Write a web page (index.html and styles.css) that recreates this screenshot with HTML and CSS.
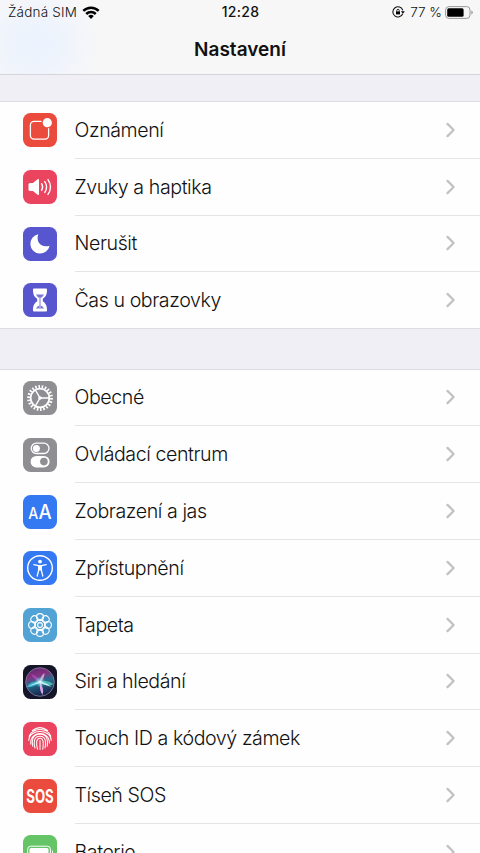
FILE: index.html
```html
<!DOCTYPE html>
<html lang="cs">
<head>
<meta charset="utf-8">
<title>Nastavení</title>
<link rel="stylesheet" href="styles.css">
</head>
<body>
<svg class="defs" width="0" height="0"><defs>
<symbol id="chev" viewBox="0 0 10 16"><path d="M1.500 1.900 7.600 8l-6.100 6.100" fill="none" stroke="#c1c1c4" stroke-width="2.200" stroke-linecap="round" stroke-linejoin="round"/></symbol>
</defs></svg>
<header class="top">
  <div class="status">
    <div class="carrier"><span>Žádná SIM</span>
      <svg class="wifi" viewBox="0 0 18 13"><g fill="none" stroke="#000" stroke-width="2.500"><path d="M1.300 4.800a11 11 0 0 1 15.400 0"/><path d="M4.200 8a6.900 6.900 0 0 1 9.600 0"/></g><path d="M9 13 6.200 10.100a4 4 0 0 1 5.600 0z"/></svg>
    </div>
    <div class="time">12:28</div>
    <div class="power">
      <svg class="lock" viewBox="0 0 13 12"><path d="M10.700 7.800a5.100 5.100 0 1 1 .1-3.500" fill="none" stroke="#111" stroke-width="1.100"/><path d="M8.900 5.200h3.900l-1.900 2.500z"/><rect x="4" y="5.400" width="4" height="3"/><path d="M4.800 5.600V4.500a1.200 1.200 0 0 1 2.400 0v1.100" fill="none" stroke="#000" stroke-width=".8"/></svg>
      <span>77 %</span>
      <svg class="battery" viewBox="0 0 28 13"><rect x=".6" y=".6" width="24.400" height="11.800" rx="3.300" fill="none" stroke="#999" stroke-width="1"/><rect x="2.200" y="2.300" width="16.400" height="8.400" rx="1.500"/><path d="M26.300 4.400q1.500.5 1.500 2.100t-1.500 2.100z" fill="#999"/></svg>
    </div>
  </div>
  <h1>Nastavení</h1>
</header>
<main>
<section class="group">
  <a class="row"><svg class="icon red" viewBox="0 0 34 34"><path d="M18.500 8.300H11a3.600 3.600 0 0 0-3.600 3.600v10.700a3.600 3.600 0 0 0 3.600 3.600h11a3.600 3.600 0 0 0 3.600-3.600v-7.300" fill="none" stroke="#fff" stroke-width="1.300"/><circle cx="24.300" cy="9.700" r="4.600" fill="#fff"/></svg><span class="label">Oznámení<svg class="chev"><use href="#chev"/></svg></span></a>
  <a class="row"><svg class="icon pink" viewBox="0 0 34 34"><path d="M5.500 14.500q0-1.500 1.500-1.500h3l4.500-3.700q1.500-.9 1.500.8v13.800q0 1.700-1.500.8L10 21H7q-1.500 0-1.500-1.500z" fill="#fff"/><path d="M18.600 13.700q2 3.300 0 6.600M21.800 11.600q3.500 5.400 0 10.800M25 9.600q5 7.400 0 14.800" fill="none" stroke="#fff" stroke-width="1.400" stroke-linecap="round"/></svg><span class="label">Zvuky a haptika<svg class="chev"><use href="#chev"/></svg></span></a>
  <a class="row"><svg class="icon purple" viewBox="0 0 34 34"><path d="M15.300 7.300C12.500 15 18.500 21.500 26.600 18.700A9.700 9.700 0 1 1 15.300 7.300z" fill="#fff"/></svg><span class="label">Nerušit<svg class="chev"><use href="#chev"/></svg></span></a>
  <a class="row"><svg class="icon purple" viewBox="0 0 34 34"><path d="M10 6.500q0-1 1-1h12q1 0 1 1c0 5-1 7-4.200 9.300v2.400C23 20.500 24 22.500 24 27.500q0 1-1 1H11q-1 0-1-1c0-5 1-7 4.200-9.300v-2.400C11 13.500 10 11.500 10 6.500z" fill="#fff"/><path d="M13 11.500h8q-1 2-3.300 3.700v7.300q2.500 1 3.300 3h-8q.8-2 3.300-3v-7.300Q14 13.500 13 11.500z" fill="#5856ce" opacity=".8"/><path d="M17 14v11" stroke="#fff" stroke-width=".6"/></svg><span class="label">Čas u obrazovky<svg class="chev"><use href="#chev"/></svg></span></a>
</section>
<section class="group">
  <a class="row"><svg class="icon gray" viewBox="0 0 34 34"><g fill="none" stroke="#fff"><circle cx="17" cy="17" r="9.400" stroke-width="1.900"/><circle cx="17" cy="17" r="11.500" stroke-width="2.800" pathLength="44" stroke-dasharray="1 1"/><path d="M17 17h9M17 17l-4.600-8M17 17l-4.600 8" stroke-width="1.500"/></g><circle cx="17" cy="17" r="1.800" fill="#fff"/></svg><span class="label">Obecné<svg class="chev"><use href="#chev"/></svg></span></a>
  <a class="row"><svg class="icon gray" viewBox="0 0 34 34"><rect x="8.200" y="5.200" width="17.800" height="10.300" rx="5.150" fill="none" stroke="#fff" stroke-width="1.300"/><circle cx="13.400" cy="10.400" r="3.500" fill="#fff"/><rect x="7.600" y="17.900" width="19" height="11.500" rx="5.750" fill="#fff"/><circle cx="20.900" cy="23.600" r="3.800" fill="#8e8e93"/></svg><span class="label">Ovládací centrum<svg class="chev"><use href="#chev"/></svg></span></a>
  <a class="row"><svg class="icon blue" viewBox="0 0 34 34"><text class="aa" x="5.200" y="24.300" font-size="15.500" textLength="10" lengthAdjust="spacingAndGlyphs">A</text><text class="aa" x="15.600" y="24.300" font-size="19.500" textLength="13.200" lengthAdjust="spacingAndGlyphs">A</text></svg><span class="label">Zobrazení a jas<svg class="chev"><use href="#chev"/></svg></span></a>
  <a class="row"><svg class="icon blue" viewBox="0 0 34 34"><circle cx="17" cy="17" r="12.300" fill="none" stroke="#fff" stroke-width="1.400"/><circle cx="17" cy="10.600" r="1.900" fill="#fff"/><path d="M10.800 13.700l4.700.9h3l4.700-.9M14.200 25l1.400-5.500v-4.500h2.800v4.500l1.400 5.500" fill="none" stroke="#fff" stroke-width="1.300" stroke-linecap="round" stroke-linejoin="round"/><path d="M15 14h4v5.500h-4z" fill="#fff"/></svg><span class="label">Zpřístupnění<svg class="chev"><use href="#chev"/></svg></span></a>
  <a class="row"><svg class="icon sky" viewBox="0 0 34 34"><g fill="none" stroke="#fff" stroke-width="1.100"><g id="petals"><circle cx="17" cy="9.100" r="3.500"/><circle cx="17" cy="24.900" r="3.500"/><circle cx="9.100" cy="17" r="3.500"/><circle cx="24.900" cy="17" r="3.500"/></g><use href="#petals" transform="rotate(45 17 17)"/><circle cx="17" cy="17" r="2.400"/><circle cx="17" cy="17" r="5.400"/></g></svg><span class="label">Tapeta<svg class="chev"><use href="#chev"/></svg></span></a>
  <a class="row"><svg class="icon siri" viewBox="0 0 34 34"><defs><linearGradient id="orb" x2=".3" y2="1"><stop offset="0" stop-color="#54286f"/><stop offset=".35" stop-color="#86307f"/><stop offset=".6" stop-color="#256c8c"/><stop offset="1" stop-color="#182851"/></linearGradient><radialGradient id="glow"><stop offset="0" stop-color="#fff"/><stop offset=".3" stop-color="#c5f5fb" stop-opacity=".7"/><stop offset="1" stop-color="#66dce6" stop-opacity="0"/></radialGradient></defs><circle cx="17" cy="17" r="14.300" fill="url(#orb)" stroke="#8c83a0" stroke-width=".8"/><path d="M17 17Q9 15 3.500 22q8 1 13.500-5z" fill="#40c7df" opacity=".75"/><path d="M17 17q7-3 13.500 2-6 4-13.500-2z" fill="#5fe0c9" opacity=".7"/><path d="M17 17q-2-6-9-8 3 6 9 8z" fill="#b44cc6" opacity=".7"/><path d="M17 17q0-6 4.500-9 .5 5-4.500 9z" fill="#f0b0d8" opacity=".8"/><path d="M17 17q-1 8 2.500 13 2-6-2.500-13z" fill="#dba3e6"/><path d="M5 21.500Q12 18 17 16q6 2 12 6-7-2-12-4-5 1-12 3.500z" fill="#dffcff" opacity=".85"/><circle cx="17" cy="17" r="5.500" fill="url(#glow)"/></svg><span class="label">Siri a hledání<svg class="chev"><use href="#chev"/></svg></span></a>
  <a class="row"><svg class="icon pink" viewBox="0 0 34 34"><g fill="none" stroke="#fff" stroke-width="1.050" stroke-linecap="round"><path d="M9.500 8.500Q17 2.700 24.500 8.500M6.200 14.200Q9 7.600 17 7.500t10.800 6.700M5.800 18.500C6 6.500 28 6.500 28.200 18.500M7.800 22.200C6.300 8.500 26.700 8 26.400 21M9.800 24.300C8.500 20 8.800 12.300 17 12.200s8 8 7.200 12.100M12 26c-1.500-5-1.500-11.800 5-11.800s5.900 7 5 11.800M14.500 27.200c-1.500-6-1.400-11 2.500-11s3.500 6 2.800 11M17 18.500v9"/></g></svg><span class="label">Touch ID a kódový zámek<svg class="chev"><use href="#chev"/></svg></span></a>
  <a class="row"><svg class="icon red" viewBox="0 0 34 34"><text class="sos" x="3.200" y="23.600" textLength="27.600" lengthAdjust="spacingAndGlyphs">SOS</text></svg><span class="label">Tíseň SOS<svg class="chev"><use href="#chev"/></svg></span></a>
  <a class="row"><svg class="icon green" viewBox="0 0 34 34"><rect x="4.700" y="11.200" width="22.700" height="12" rx="3" fill="none" stroke="#fff" stroke-width="1"/><rect x="6.500" y="13" width="19" height="8.500" rx="1.500" fill="#fff"/><path d="M29 15q2 2 0 4z" fill="#fff"/></svg><span class="label">Baterie<svg class="chev"><use href="#chev"/></svg></span></a>
</section>
</main>
</body>
</html>
```

FILE: styles.css
```css
* { box-sizing: border-box; }
html, body { height: 853px; overflow: hidden; }
body { margin: 0; background: #f0eff5; color: #111; font-family: Inter, "Liberation Sans", sans-serif; }
.defs { display: none; }
.top { height: 75px; border-bottom: 1px solid #d4d4da; background: radial-gradient(ellipse 65px 60px at 35px 44px, #ebf3fe 0, #eff4fc 45%, rgba(247,247,248,0) 100%), #f7f7f8; }
.status { display: grid; grid-template-columns: 1fr auto 1fr; align-items: center; height: 24px; padding: 0 7px 0 8px; font-size: 13.500px; line-height: 24px; }
.carrier, .power { display: flex; align-items: center; }
.carrier { gap: 5px; font-weight: 350; letter-spacing: .2px; }
.power { justify-content: flex-end; gap: 4px; font-weight: 350; }
.wifi { width: 18px; height: 13px; }
.lock { width: 13px; height: 12px; margin-right: 1px; }
.battery { width: 28px; height: 13px; margin-left: -1px; }
.time { font-weight: 500; font-size: 14px; letter-spacing: .3px; }
h1 { margin: 12px 0 0; padding-top: 1px; text-align: center; font-size: 19px; line-height: 26px; font-weight: 600; }
main { height: 778px; padding-top: 26px; overflow: hidden; }
.group { background: #fefefe; border-top: 1px solid #dcdce1; border-bottom: 1px solid #dcdce1; margin-bottom: 39.400px; }
.row { display: flex; align-items: center; height: 56.800px; padding-left: 23px; }
.row:last-child { height: 55.800px; }
.icon { flex: none; width: 34px; height: 34px; border-radius: 7.500px; margin-right: 17.500px; }
.label { display: flex; flex: 1; align-items: center; justify-content: space-between; height: 100%; padding-right: 24.500px; border-bottom: 1px solid #e5e5e8; font-size: 19.600px; font-weight: 350; letter-spacing: -.42px; }
.row:last-child .label { border-bottom: 0; }
.chev { width: 10px; height: 16px; }
.red { background: #eb4b3d; }
.pink { background: #ea445e; }
.purple { background: #5856ce; }
.gray { background: #8e8e93; }
.blue { background: #3478f2; }
.sky { background: #51a3d6; }
.siri { background: #15152a; }
.green { background: #65c466; }
.aa { fill: #fff; font-weight: 500; }
.sos { fill: #fff; font-size: 18.500px; font-weight: 700; }
```
